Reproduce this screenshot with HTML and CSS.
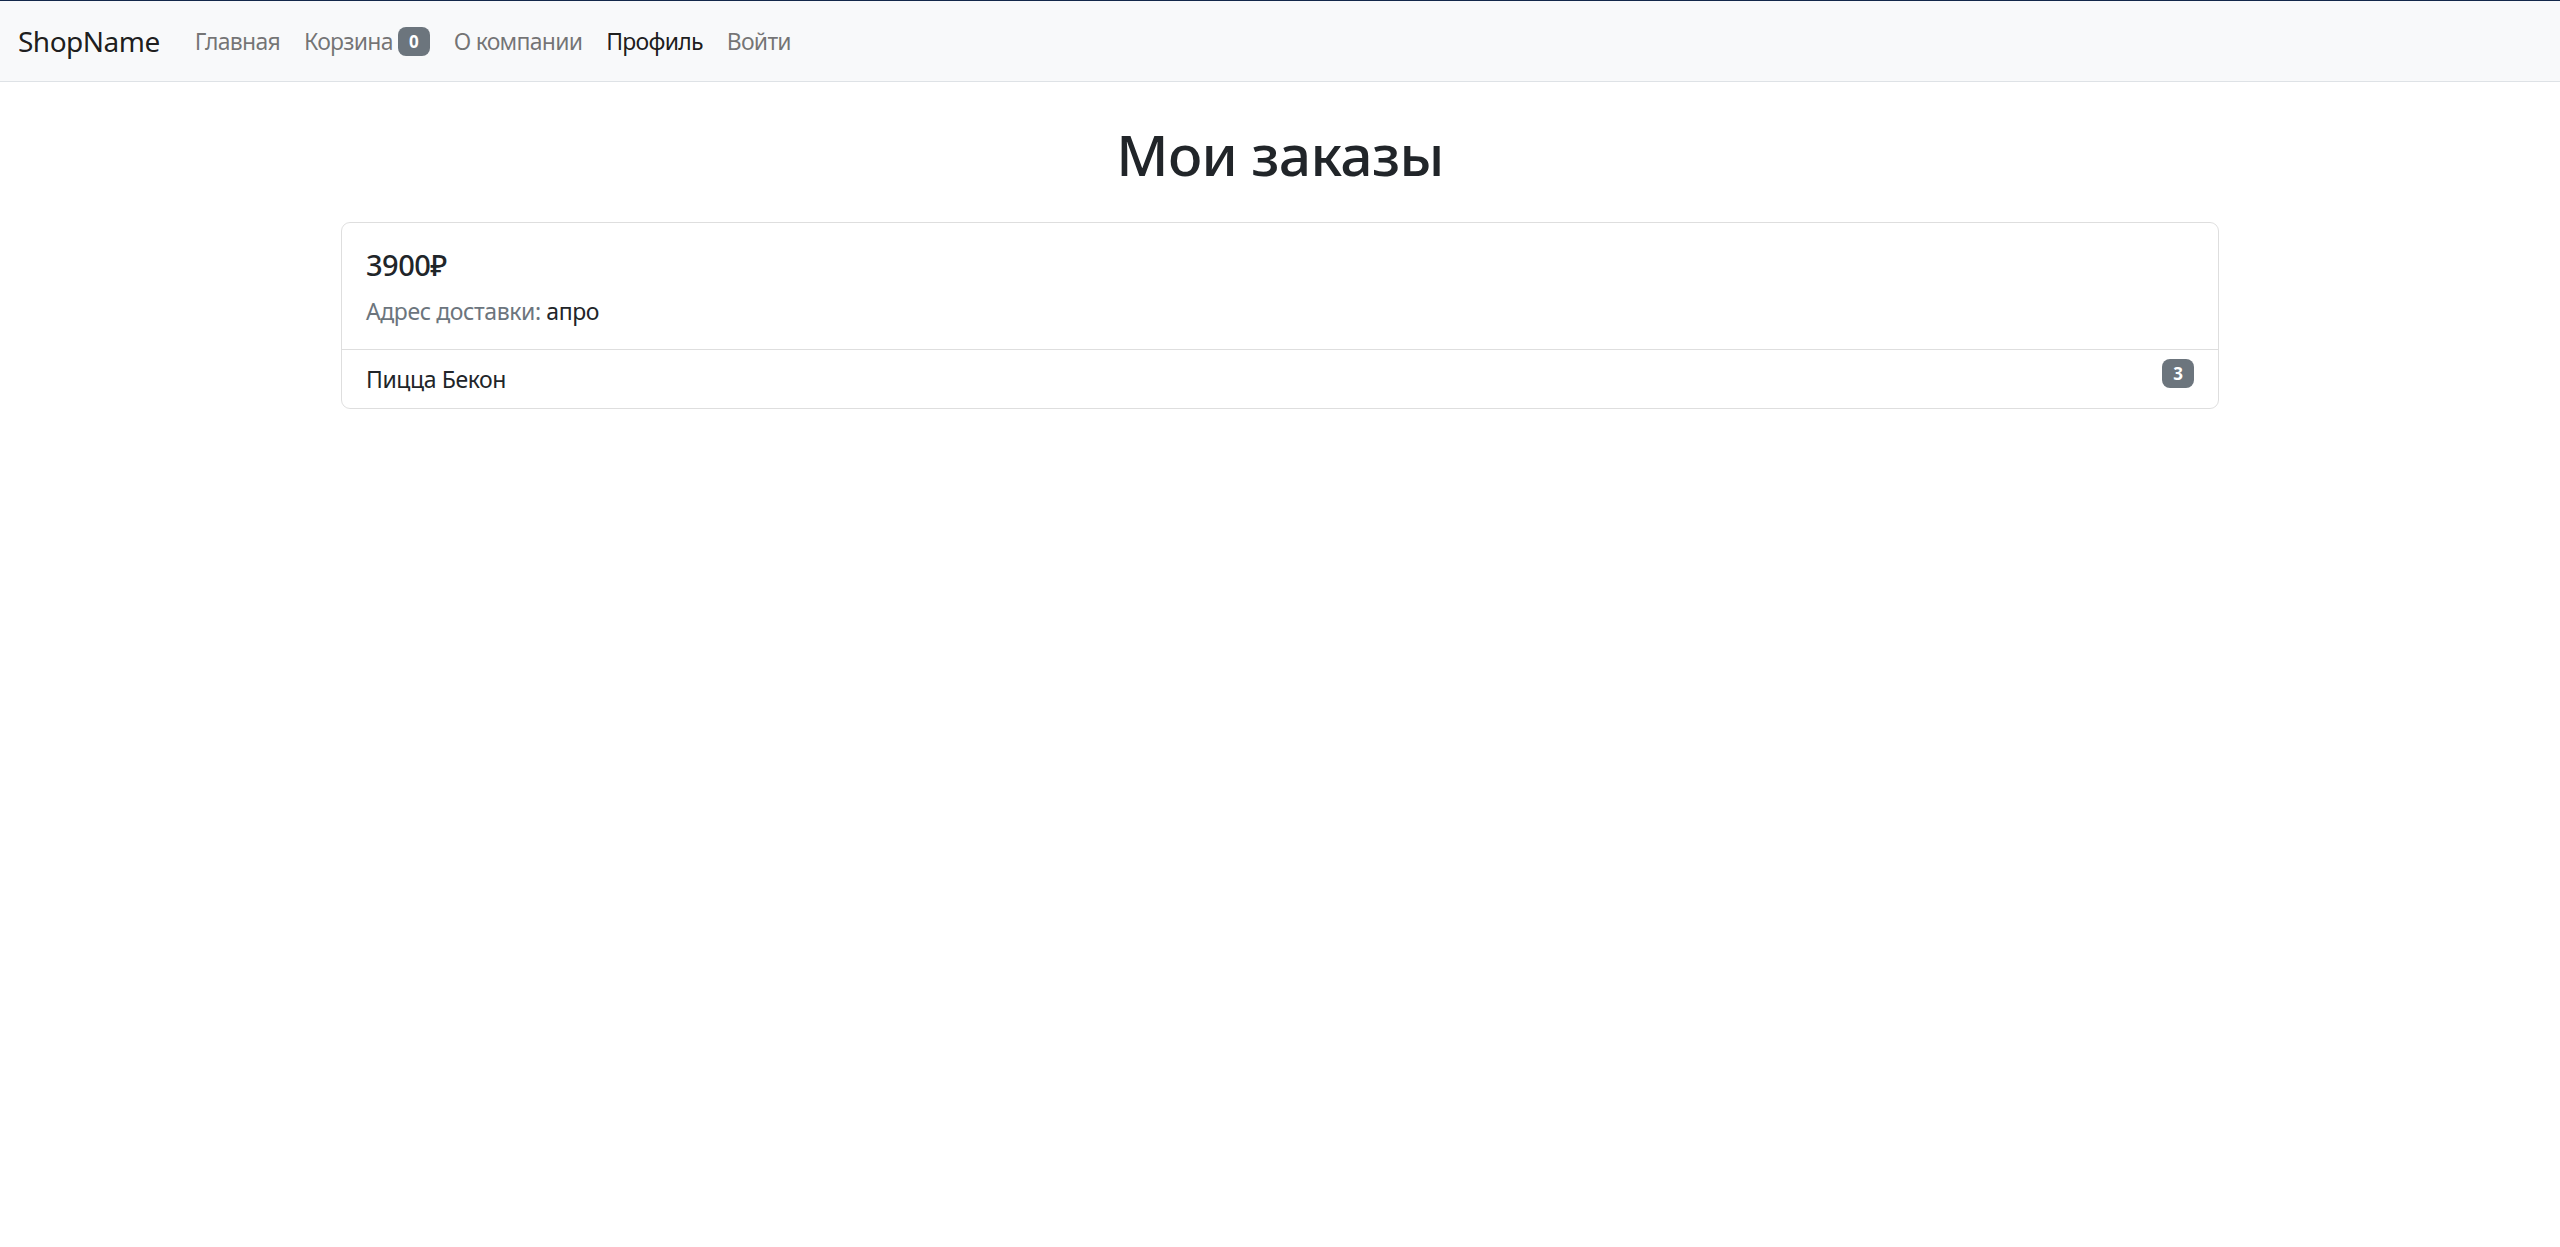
FILE: index.html
```html
<!DOCTYPE html>
<html lang="ru">
<head>
<meta charset="utf-8">
<title>Мои заказы</title>
<link rel="stylesheet" href="styles.css">
</head>
<body>
<div class="topline"></div>
<nav class="navbar">
  <a class="brand" href="#">ShopName</a>
  <ul class="nav">
    <li><a class="nav-link" href="#">Главная</a></li>
    <li><a class="nav-link" href="#">Корзина <span class="badge">0</span></a></li>
    <li><a class="nav-link" href="#">О компании</a></li>
    <li><a class="nav-link active" href="#">Профиль</a></li>
    <li><a class="nav-link" href="#">Войти</a></li>
  </ul>
</nav>
<main class="main">
  <h1 class="title">Мои заказы</h1>
  <div class="card">
    <div class="card-body">
      <h5 class="card-title">3900₽</h5>
      <p class="card-text"><span class="muted">Адрес доставки:</span> апро</p>
    </div>
    <ul class="list">
      <li class="list-item"><span>Пицца Бекон</span><span class="badge badge-qty">3</span></li>
    </ul>
  </div>
</main>
</body>
</html>
```

FILE: styles.css
```css
* { box-sizing: border-box; }
html, body { margin: 0; padding: 0; }
body {
  font-family: "Noto Sans", "Open Sans", sans-serif;
  font-size: 24px;
  line-height: 1.5;
  color: #212529;
  background: #fff;
}
.topline { height: 1px; background: #13284a; }
.navbar {
  display: flex;
  align-items: center;
  background: #f8f9fa;
  border-bottom: 1px solid #dee2e6;
  height: 81px;
  padding: 0 18px;
}
.brand {
  font-size: 28px;
  color: rgba(0,0,0,.9);
  text-decoration: none;
  margin-right: 23px;
  letter-spacing: -0.5px;
}
.nav {
  display: flex;
  list-style: none;
  margin: 0;
  padding: 0;
}
.nav-link {
  display: block;
  padding: 12px 12px;
  color: rgba(0,0,0,.55);
  text-decoration: none;
  font-size: 23px;
  letter-spacing: -0.75px;
}
.nav-link.active { color: rgba(0,0,0,.9); }
.badge {
  display: inline-block;
  background: #6c757d;
  color: #fff;
  font-size: 17px;
  font-weight: 700;
  line-height: 1;
  padding: 6px 11px;
  border-radius: 8px;
  vertical-align: 2px;
  letter-spacing: 0;
}
.badge-qty { margin-top: -10px; }
.main {
  width: 1878px;
  margin: 0 auto;
}
.title {
  text-align: center;
  font-size: 57px;
  font-weight: 500;
  line-height: 1.2;
  margin: 38px 0 34px;
  letter-spacing: -0.7px;
}
.card {
  border: 1px solid rgba(0,0,0,.13);
  border-radius: 9px;
}
.card-body { padding: 25px 24px 20px; }
.card-title {
  font-size: 29px;
  font-weight: 500;
  line-height: 1.2;
  margin: 0 0 11px;
  letter-spacing: -0.5px;
}
.card-text { margin: 0; font-size: 23px; letter-spacing: -0.4px; }
.muted { color: #6c757d; }
.list { list-style: none; margin: 0; padding: 0; }
.list-item {
  display: flex;
  justify-content: space-between;
  align-items: center;
  border-top: 1px solid rgba(0,0,0,.13);
  padding: 12px 24px;
  font-size: 23px;
  letter-spacing: -0.4px;
}
```
